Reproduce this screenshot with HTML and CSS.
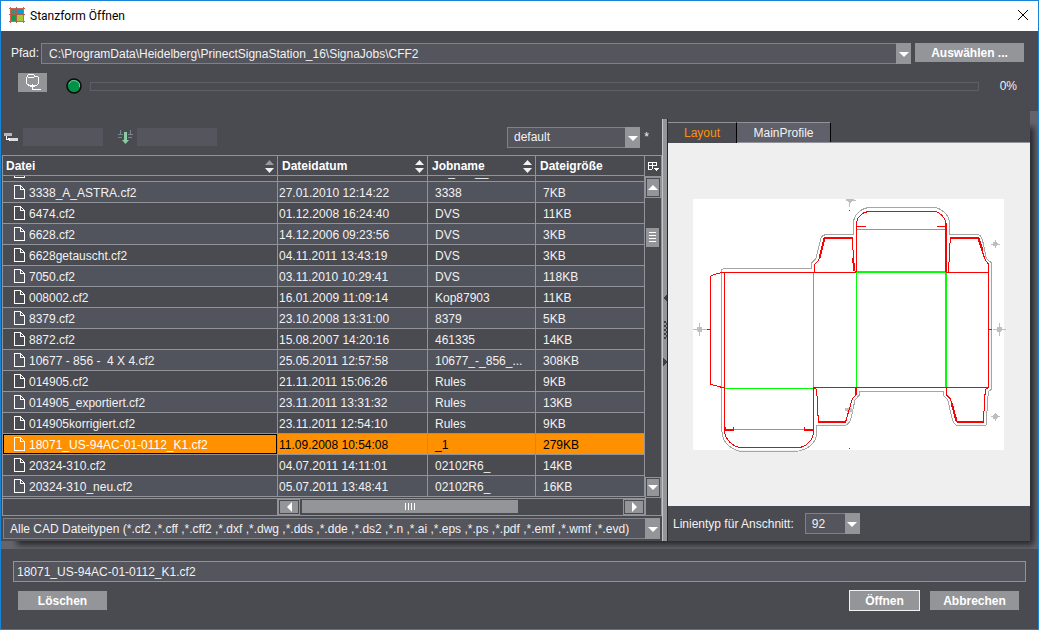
FILE: index.html
```html
<!DOCTYPE html>
<html lang="de">

<head>
    <meta charset="UTF-8">
    <meta name="viewport" content="width=device-width, initial-scale=1.0">
    <title>Stanzform Öffnen</title>
    <link rel="stylesheet" href="styles.css">
</head>

<body>
    <div class="window">
        <header class="titlebar">
            <svg class="logo" width="16" height="16" viewBox="0 0 16 16">
                <rect x="1" y="1" width="7" height="7" fill="#3f8f7a" />
                <rect x="8" y="1" width="7" height="7" fill="#0a9bd0" />
                <rect x="1" y="8" width="7" height="7" fill="#12a050" />
                <rect x="8" y="8" width="7" height="7" fill="#a8c83c" />
                <path d="M1.500 0V16M14.500 0V16M0 1.500H16M0 14.500H16" stroke="#d8604c" fill="none" />
                <path d="M7.500 0V16M0 7.500H16" stroke="#a8604c" fill="none" />
            </svg>
            <h1>Stanzform Öffnen</h1>
            <button class="close" type="button" aria-label="Schließen">
                <svg width="12" height="12" viewBox="0 0 12 12"><path d="M1 1L11 11M11 1L1 11" stroke="#000" fill="none" /></svg>
            </button>
        </header>

        <section class="location">
            <div class="path-row">
                <label for="path">Pfad:</label>
                <div class="combo">
                    <select id="path">
                        <option>C:\ProgramData\Heidelberg\PrinectSignaStation_16\SignaJobs\CFF2</option>
                    </select>
                    <span class="arrow"></span>
                </div>
                <button class="btn choose" type="button">Auswählen ...</button>
            </div>
            <div class="progress-row">
                <button class="btn up-folder" type="button" aria-label="Übergeordneter Ordner">
                    <svg width="16" height="17" viewBox="0 0 16 17" fill="#fff" shape-rendering="crispEdges">
                        <path d="M3 0H9V1H3ZM2 1H3V3H2ZM9 1H10V2H13V3H9ZM1 3H2V10H1ZM13 3H14V10H13ZM3 3H9V4H3ZM2 10H4V11H2ZM12 10H13V11H12ZM3 11H6V12H3ZM9 11H12V12H9Z" />
                        <path d="M7 10H8V15H16V16H7ZM6 11H9V12H6ZM5 12H10V13H5Z" />
                    </svg>
                </button>
                <svg class="led" width="16" height="16" viewBox="0 0 16 16">
                    <circle cx="8" cy="8" r="7" fill="#009245" stroke="#0b0b0b" stroke-width="1.500" />
                    <path d="M3 6A5.500 5.500 0 0 1 13.500 9" stroke="#7cc79c" fill="none" />
                </svg>
                <div class="progress" role="progressbar" aria-label="Fortschritt" aria-valuenow="0"></div>
                <span class="percent">0%</span>
            </div>
        </section>

        <main class="workspace">
            <div class="panes">
                <section class="files">
                    <div class="toolbar">
                        <svg width="15" height="12" viewBox="0 0 15 12" shape-rendering="crispEdges">
                            <path d="M0 2H8V5H0Z" fill="#b8b8bc" />
                            <path d="M2.500 5V8.500H6M4 7.500H5V10" stroke="#fff" fill="none" />
                            <path d="M6 7H14V10H6Z" fill="#dcdcde" />
                        </svg>
                        <input type="text" aria-label="Filter Name">
                        <svg class="filter-icon" width="15" height="14" viewBox="0 0 15 14">
                            <path d="M2.500 0V5M0 4.500H5M0 7.500H4M12.500 0V5M10 4.500H15M10 7.500H14" stroke="#76868f" fill="none" />
                            <path d="M6 2H9V10H11L7.500 14L4 10H6Z" fill="#8ccba4" />
                        </svg>
                        <input type="text" aria-label="Filter Wert">
                        <div class="combo preset">
                            <select aria-label="Voreinstellung">
                                <option>default</option>
                            </select>
                            <span class="arrow"></span>
                        </div>
                        <span class="modified">*</span>
                    </div>

                    <div class="file-list">
                        <table>
                            <thead>
                                <tr>
                                    <th><div>Datei <svg class="sort active" width="9" height="13" viewBox="0 0 9 13"><path d="M0 5L4.500 0L9 5Z" /><path d="M0 8L4.500 13L9 8Z" /></svg></div></th>
                                    <th><div>Dateidatum <svg class="sort" width="9" height="13" viewBox="0 0 9 13"><path d="M0 5L4.500 0L9 5Z" /><path d="M0 8L4.500 13L9 8Z" /></svg></div></th>
                                    <th><div>Jobname <svg class="sort" width="9" height="13" viewBox="0 0 9 13"><path d="M0 5L4.500 0L9 5Z" /><path d="M0 8L4.500 13L9 8Z" /></svg></div></th>
                                    <th><div>Dateigröße</div></th>
                                </tr>
                            </thead>
                            <tbody id="fileRows"></tbody>
                        </table>
                        <div class="vscroll">
                            <button class="columns" type="button" aria-label="Spalten">
                                <svg width="12" height="11" viewBox="0 0 12 11" shape-rendering="crispEdges">
                                    <path d="M9.500 5V1.500H1.500V8.500H5M1 4.500H9M5.500 1V8" stroke="#fff" fill="none" />
                                    <path d="M6 7H12L9 10Z" fill="#fff" />
                                </svg>
                            </button>
                            <button class="scroll-btn" type="button" aria-label="Nach oben"><span class="tri up"></span></button>
                            <div class="track">
                                <div class="thumb"></div>
                            </div>
                            <button class="scroll-btn" type="button" aria-label="Nach unten"><span class="tri down"></span></button>
                        </div>
                        <div class="hscroll">
                            <div class="fixed-part"></div>
                            <button class="scroll-btn" type="button" aria-label="Nach links"><span class="tri left"></span></button>
                            <div class="track">
                                <div class="thumb"></div>
                            </div>
                            <button class="scroll-btn" type="button" aria-label="Nach rechts"><span class="tri right"></span></button>
                        </div>
                        <div class="corner"></div>
                    </div>

                    <div class="combo file-type">
                        <select aria-label="Dateityp">
                            <option>Alle CAD Dateitypen (*.cf2 ,*.cff ,*.cff2 ,*.dxf ,*.dwg ,*.dds ,*.dde ,*.ds2 ,*.n ,*.ai ,*.eps ,*.ps ,*.pdf ,*.emf ,*.wmf ,*.evd)</option>
                        </select>
                        <span class="arrow"></span>
                    </div>
                </section>

                <div class="splitter">
                    <svg width="4" height="72" viewBox="0 0 4 72" shape-rendering="crispEdges" fill="#3f3f46">
                        <path d="M4 0V8L0 4Z" />
                        <path d="M0 64V72L4 68Z" />
                        <path d="M1 27h2v2H1zM1 31h2v2H1zM1 35h2v2H1zM1 39h2v2H1zM1 43h2v2H1zM3 29h1v2H3zM3 33h1v2H3zM3 37h1v2H3zM3 41h1v2H3z" />
                    </svg>
                </div>

                <section class="preview">
                    <div class="tabs" role="tablist">
                        <button class="tab active" type="button" role="tab" aria-selected="true">Layout</button>
                        <button class="tab" type="button" role="tab" aria-selected="false">MainProfile</button>
                    </div>
                    <div class="canvas">
                        <svg class="die" width="311" height="251" viewBox="9 27 933 753" fill="none" stroke-width="3" shape-rendering="crispEdges">
                            <rect x="9" y="27" width="933" height="753" fill="#fff" />
                            <!-- bleed contour -->
                            <path stroke="#a6a6a6" d="M94.500 727V238L103 235.500H364.500V219L378 205L394 140L406 133.500H490.500V98C492 72 515 54 540 52.500H730C755 54 778 75 778.500 100V133.500H863Q873 136 877 148L889 205L904.500 219V598L895 605L888 706.500H800Q790 700 786 685L773 628L760.500 617V604.500H508.500V615L495 630L482 690Q476 702 467 706.500H379.500V735C377 760 350 782 315 784.500H158C130 783 97 760 96 727" />
                            <!-- register marks -->
                            <g stroke="#bebebe" fill="#bebebe">
                                <path d="M9 418.500H50M28.500 399V438M908 418.500H948M928.500 399V438M902 162.500H930M916.500 150V174M902 680.500H930M916.500 668V692M478.500 27V50M467 31.500H498" />
                                <circle cx="29" cy="418" r="7" />
                                <circle cx="928" cy="418" r="7" />
                                <circle cx="916" cy="162" r="6" />
                                <circle cx="916" cy="680" r="6" />
                                <path d="M469 28H489L479 38ZM467 654H483V658H488V663H472V660H467Z" />
                            </g>
                            <!-- creases -->
                            <g stroke="#00ff00">
                                <path d="M105 595.500H370M370.500 249V595M499.500 249V592M130 718.500H343M501 118.500H767" />
                                <path stroke-width="6" d="M499 245H768M768 247V592" />
                            </g>
                            <!-- cuts -->
                            <g stroke="#f00">
                                <path d="M103 247.500H97L73 253L61.500 259V583L73 586L97 592.500H103" />
                                <path d="M97 247.500H499M371 592.500H897M103.500 247V722C105 750 130 772 155 772.500H325C348 772 370 750 370.500 725V592" />
                                <path d="M373.500 247V223L386 211L404 145M488 145L489 180L493 240L499 247" />
                                <path d="M499.500 247V103C499 80 520 65 537 64.500H733C750 66 768 85 768.500 103M499 109.500H528M741 109.500H768" />
                                <path d="M768 247.500H895M776 245L778 190L781 144M863 144L885 208L895.500 223V592" />
                                <path d="M373 594L380 598L385 695M467 695L487 626L498 615V592" />
                                <path d="M769.500 592V615L781 626L800 695M880 695L886 598L895 594" />
                                <path d="M51 418.500H62M897 418.500H906M477 61.500H480M477 775.500H480M106.500 711V722M130.500 711V722M343.500 711V722" />
                                <path stroke-width="6" d="M402 144H489M779 144H866M768 98V247M105 720H130M346 720H370M385 696H469M800 696H882M498 593V616M403 145L388 206M866 145L878 184M489 205L493 243M785 640L800 695" />
                            </g>
                        </svg>
                    </div>
                    <div class="bleed-row">
                        <label for="lineType">Linientyp für Anschnitt:</label>
                        <div class="combo line-type">
                            <select id="lineType">
                                <option>92</option>
                            </select>
                            <span class="arrow"></span>
                        </div>
                    </div>
                </section>
            </div>
        </main>

        <footer class="actions">
            <input type="text" id="fileName" aria-label="Dateiname" value="18071_US-94AC-01-0112_K1.cf2">
            <div class="action-row">
                <button class="btn delete" type="button">Löschen</button>
                <button class="btn open" type="button">Öffnen</button>
                <button class="btn cancel" type="button">Abbrechen</button>
            </div>
        </footer>
    </div>

    <script>
        const files = [
            ['', '', '33_338__', ''],
            ['3338_A_ASTRA.cf2', '27.01.2010 12:14:22', '3338', '7KB'],
            ['6474.cf2', '01.12.2008 16:24:40', 'DVS', '11KB'],
            ['6628.cf2', '14.12.2006 09:23:56', 'DVS', '3KB'],
            ['6628getauscht.cf2', '04.11.2011 13:43:19', 'DVS', '3KB'],
            ['7050.cf2', '03.11.2010 10:29:41', 'DVS', '118KB'],
            ['008002.cf2', '16.01.2009 11:09:14', 'Kop87903', '11KB'],
            ['8379.cf2', '23.10.2008 13:31:00', '8379', '5KB'],
            ['8872.cf2', '15.08.2007 14:20:16', '461335', '14KB'],
            ['10677 - 856 -  4 X 4.cf2', '25.05.2011 12:57:58', '10677_-_856_...', '308KB'],
            ['014905.cf2', '21.11.2011 15:06:26', 'Rules', '9KB'],
            ['014905_exportiert.cf2', '23.11.2011 13:31:32', 'Rules', '13KB'],
            ['014905korrigiert.cf2', '23.11.2011 12:54:10', 'Rules', '9KB'],
            ['18071_US-94AC-01-0112_K1.cf2', '11.09.2008 10:54:08', '_1', '279KB'],
            ['20324-310.cf2', '04.07.2011 14:11:01', '02102R6_', '14KB'],
            ['20324-310_neu.cf2', '05.07.2011 13:48:41', '02102R6_', '16KB']
        ];
        const fileIcon = '<svg width="11" height="14" viewBox="0 0 11 14" fill="none" stroke="#fff" shape-rendering="crispEdges"><path d="M0.500 0.500H6.500L10.500 4.500V13.500H0.500ZM6.500 0.500V4.500H10.500" /></svg>';
        const rows = document.getElementById('fileRows');
        const fileName = document.getElementById('fileName');

        files.forEach(([name, date, job, size]) => {
            const row = document.createElement('tr');
            if (name === fileName.value) row.className = 'selected';
            row.innerHTML = `
                <td><div class="name">${fileIcon}<span>${name}</span></div></td>
                <td class="date">${date}</td>
                <td>${job}</td>
                <td>${size}</td>
            `;
            row.addEventListener('click', () => {
                rows.querySelectorAll('.selected').forEach(r => r.classList.remove('selected'));
                row.classList.add('selected');
                fileName.value = name;
            });
            rows.appendChild(row);
        });

        // keep the end of the list in view
        rows.scrollTop = rows.scrollHeight;
    </script>
</body>

</html>
```
FILE: styles.css
```css
* {
    box-sizing: border-box;
}

body {
    margin: 0;
    font-family: "Liberation Sans", Arial, sans-serif;
    font-size: 12px;
    color: #f2f2f2;
    background: #4a4a51;
}

svg {
    display: block;
    flex: none;
}

button,
input,
select {
    margin: 0;
    padding: 0;
    border: none;
    border-radius: 0;
    font: inherit;
    color: inherit;
    background: none;
}

button {
    display: flex;
    align-items: center;
    justify-content: center;
}

.window {
    display: flex;
    flex-direction: column;
    height: 100vh;
    border: 1px solid #1883d7;
}

/* title bar */

.titlebar {
    display: flex;
    align-items: center;
    flex: none;
    height: 30px;
    padding: 0 9px 2px 8px;
    background: #fff;
    color: #000;
}

.titlebar h1 {
    flex: 1;
    margin: 0 0 0 5px;
    padding-top: 2px;
    font: 12px Roboto, "Open Sans", sans-serif;
}

/* path and progress */

.location {
    flex: none;
    height: 80px;
    padding-top: 12px;
}

.path-row {
    display: flex;
    padding: 0 14px 0 10px;
}

.path-row label {
    width: 30px;
    line-height: 21px;
}

.path-row .combo {
    flex: 1;
    margin-right: 4px;
}

.combo {
    display: grid;
    height: 21px;
    border: 1px solid #808187;
    border-right: none;
    background: #54555d;
}

.combo select {
    grid-area: 1 / 1;
    width: 100%;
    min-width: 0;
    padding: 0 16px 0 6px;
    appearance: none;
    outline: none;
}

.path-row select {
    padding-left: 7px;
}

.combo option {
    background: #54555d;
}

.combo .arrow {
    grid-area: 1 / 1;
    justify-self: end;
    display: flex;
    align-items: center;
    justify-content: center;
    width: 15px;
    margin: -1px 0;
    background: #949599;
    pointer-events: none;
}

.combo .arrow::before {
    content: "";
    margin-top: 2px;
    border: 5px solid transparent;
    border-top-color: #fff;
    border-bottom: none;
}

.btn {
    height: 19px;
    background: #949599;
    color: #fff;
    font-weight: bold;
}

.choose {
    width: 109px;
}

.progress-row {
    display: flex;
    align-items: center;
    height: 26px;
    margin-top: 9px;
    padding: 0 21px 0 17px;
}

.up-folder {
    align-self: flex-start;
    width: 29px;
}

.led {
    margin: 0 8px 0 19px;
}

.progress {
    flex: 1;
    height: 9px;
    border: 1px solid #5d5e66;
}

.percent {
    width: 38px;
    text-align: right;
}

/* workspace */

.workspace {
    flex: 1;
    display: flex;
    min-height: 0;
    padding: 0 8px 8px 0;
    background: #63646c;
    overflow: hidden;
}

.panes {
    flex: 1;
    display: grid;
    grid-template-columns: minmax(0, 661fr) 6px minmax(0, 362fr);
    min-height: 0;
    padding-top: 8px;
    background: #4a4a51;
    box-shadow: 10px 10px 6px -6px rgba(0, 0, 0, 0.6);
}

.files {
    display: flex;
    flex-direction: column;
    min-height: 0;
}

.toolbar {
    display: flex;
    align-items: center;
    flex: none;
    height: 36px;
    padding: 0 13px 0 3px;
}

.toolbar input {
    width: 80px;
    height: 18px;
    margin-left: 4px;
    background: #54555d;
}

.toolbar .filter-icon {
    margin-left: 15px;
}

.preset {
    width: 133px;
    margin-left: auto;
}

.modified {
    width: 9px;
    text-align: right;
}

.file-list {
    flex: 1;
    display: grid;
    grid-template: minmax(0, 1fr) 17px / minmax(0, 1fr) 16px;
    min-height: 0;
    margin: 0 0 0 1px;
    border: 1px solid #929399;
}

table {
    display: flex;
    flex-direction: column;
    min-height: 0;
}

thead {
    display: block;
    flex: none;
}

tbody {
    display: block;
    flex: 1;
    min-height: 0;
    padding-bottom: 1px;
    overflow: hidden;
}

tr {
    display: grid;
    grid-template-columns: minmax(0, 1fr) 150px 108px 109px;
}

th {
    display: block;
    height: 20px;
    padding: 0 3px 0 4px;
    border-right: 1px solid #929399;
    border-bottom: 1px solid #929399;
    color: #fff;
    line-height: 21px;
    text-align: left;
}

th:first-child {
    padding-left: 3px;
}

th div {
    display: flex;
    align-items: center;
    justify-content: space-between;
    height: 20px;
}

.sort {
    fill: #f2f2f2;
}

.sort.active path:first-child {
    fill: #98999e;
}

td {
    display: block;
    height: 21px;
    padding: 1px 7px 0;
    border-right: 1px solid #929399;
    border-bottom: 1px solid #929399;
    line-height: 20px;
    white-space: pre;
    overflow: hidden;
}

tr:nth-child(even) td {
    background: #52545d;
}

td:first-child {
    padding: 0;
}

td.date {
    padding: 1px 1px 0;
}

.name {
    display: flex;
    align-items: center;
    gap: 4px;
    height: 20px;
    padding-left: 11px;
}

.name span {
    padding-top: 2px;
}

tr.selected td {
    background: #ff9100;
    color: #000;
}

.selected .name {
    outline: 1px solid #000;
    outline-offset: -1px;
    color: #fff;
}

/* scroll bars */

.vscroll {
    display: flex;
    flex-direction: column;
}

.columns {
    height: 21px;
    border-bottom: 1px solid #929399;
}

.scroll-btn {
    flex: none;
    background: #949599;
    border: 2px solid #4a4a51;
    outline: 1px solid #929399;
    outline-offset: -1px;
}

.vscroll .scroll-btn {
    height: 21px;
}

.track {
    flex: 1;
}

.vscroll .thumb {
    width: 13px;
    height: 19px;
    margin: 30px 1px 0;
    padding: 4px 3px;
    background: #949599;
}

.vscroll .thumb::before {
    content: "";
    display: block;
    height: 10px;
    background: repeating-linear-gradient(#fff 0 1px, transparent 1px 3px);
}

.hscroll {
    display: flex;
    border-top: 1px solid #929399;
}

.hscroll .fixed-part {
    flex: 1;
    border-right: 1px solid #929399;
}

.hscroll .scroll-btn {
    width: 22px;
}

.hscroll .track {
    flex: none;
    width: 323px;
    padding: 1px 2px;
}

.hscroll .thumb {
    display: flex;
    justify-content: center;
    align-items: center;
    width: 216px;
    height: 13px;
    background: #949599;
}

.hscroll .thumb::before {
    content: "";
    width: 10px;
    height: 7px;
    background: repeating-linear-gradient(90deg, #fff 0 1px, transparent 1px 3px);
}

.tri {
    border: 5px solid transparent;
}

.tri.up {
    border-bottom-color: #fff;
    border-top: none;
}

.tri.down {
    border-top-color: #fff;
    border-bottom: none;
}

.tri.left {
    border-right-color: #fff;
    border-left: none;
}

.tri.right {
    border-left-color: #fff;
    border-right: none;
}

.corner {
    border-left: 1px solid #929399;
}

.file-type {
    flex: none;
    margin: 2px;
}

.splitter {
    display: flex;
    align-items: center;
    border-left: 1px solid #c4c5c8;
    border-right: 1px solid #26262b;
    background: #949599;
}

/* preview */

.preview {
    display: flex;
    flex-direction: column;
    min-height: 0;
    padding-top: 3px;
}

.tabs {
    display: flex;
    flex: none;
    height: 21px;
    border-bottom: 1px solid #929399;
}

.tab {
    width: 94px;
    border-top: 1px solid #929399;
    border-right: 1px solid #000;
    background: #5f6069;
}

.tab.active {
    width: 69px;
    margin-bottom: -1px;
    background: #4a4a51;
    color: #ff9100;
}

.canvas {
    flex: 1;
    display: flex;
    align-items: center;
    justify-content: center;
    min-height: 0;
    padding-right: 1px;
    background: #efefef;
}

.die {
    overflow: visible;
}

.bleed-row {
    display: flex;
    align-items: center;
    flex: none;
    height: 35px;
    padding-left: 5px;
}

.line-type {
    width: 55px;
    margin-left: 11px;
}

/* footer */

.actions {
    flex: none;
    height: 80px;
    padding: 12px 12px 0;
}

.actions input {
    display: block;
    width: 100%;
    height: 21px;
    padding: 0 3px;
    border: 1px solid #929399;
    background: #54555d;
    outline: none;
}

.action-row {
    display: flex;
    align-items: center;
    gap: 10px;
    margin-top: 8px;
    padding: 0 7px 0 5px;
}

.delete,
.cancel {
    width: 89px;
}

.open {
    width: 71px;
    height: 21px;
    margin-left: auto;
    border: 1px solid #f2f2f2;
}
```
